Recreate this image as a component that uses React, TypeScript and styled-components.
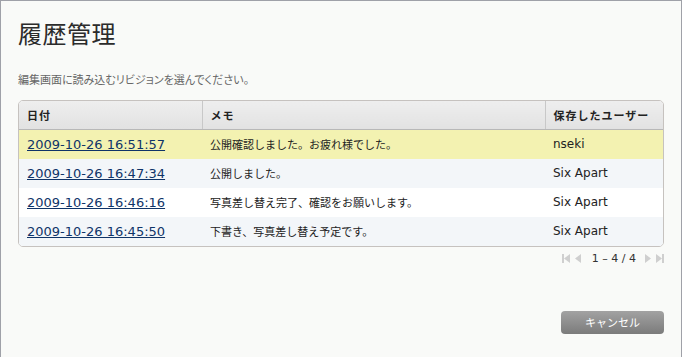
import styled, { createGlobalStyle } from "styled-components";

const GlobalStyle = createGlobalStyle`
  html, body {
    margin: 0;
    padding: 0;
  }
  body {
    font-family: "DejaVu Sans", "Noto Sans CJK JP", sans-serif;
    background: #f9faf8;
  }
`;

const Page = styled.div`
  box-sizing: border-box;
  width: 682px;
  height: 357px;
  border: 1px solid #9fa1a8;
  border-bottom: none;
  background: #f9faf8;
  padding: 18px 17px 0 17px;
  display: flex;
  flex-direction: column;
`;

const Title = styled.h1`
  margin: 0;
  font-family: "Noto Sans CJK JP", sans-serif;
  font-size: 24px;
  font-weight: 400;
  line-height: 28px;
  color: #2b2b2b;
  letter-spacing: 0.5px;
`;

const Lead = styled.p`
  margin: 24px 0 0 0;
  font-family: "Noto Sans CJK JP", sans-serif;
  font-size: 11px;
  line-height: 16px;
  color: #666;
  font-feature-settings: "palt";
`;

const TableBox = styled.div`
  margin-top: 13px;
  border: 1px solid #c6c2bf;
  border-radius: 5px;
  overflow: hidden;
  background: #fff;
`;

const Table = styled.table`
  width: 100%;
  border-collapse: collapse;
  table-layout: fixed;
`;

const Th = styled.th<{ $w?: number }>`
  box-sizing: border-box;
  width: ${(p) => (p.$w ? `${p.$w}px` : "auto")};
  height: 28px;
  padding: 0 8px;
  text-align: left;
  font-family: "Noto Sans CJK JP", sans-serif;
  font-size: 11px;
  font-weight: 700;
  color: #222;
  letter-spacing: 1px;
  background: linear-gradient(#eeeeee, #e2e2e2);
  border-bottom: 1px solid #b8b8b8;
  border-left: 1px solid #c8c8c8;
  &:first-child {
    border-left: none;
  }
`;

const Tr = styled.tr<{ $bg: string }>`
  background: ${(p) => p.$bg};
`;

const Td = styled.td`
  height: 29px;
  padding: 0 8px;
  font-family: "DejaVu Sans", "Noto Sans CJK JP", sans-serif;
  font-size: 12px;
  color: #222;
  white-space: nowrap;
`;

const Memo = styled.span`
  font-family: "Noto Sans CJK JP", sans-serif;
  font-size: 11px;
`;

const DateLink = styled.a`
  font-family: "DejaVu Sans", sans-serif;
  font-size: 13px;
  color: #0f3468;
  text-decoration: underline;
`;

const Pager = styled.div`
  display: flex;
  justify-content: flex-end;
  align-items: center;
  gap: 3px;
  margin-top: 5px;
  height: 14px;
`;

const PageText = styled.span`
  font-family: "DejaVu Sans", sans-serif;
  font-size: 11px;
  color: #333;
  margin: 0 6px 0 8px;
`;

const Footer = styled.div`
  display: flex;
  justify-content: flex-end;
  margin-top: 45px;
`;

const CancelButton = styled.button`
  width: 103px;
  height: 23px;
  border: none;
  border-radius: 4px;
  background: linear-gradient(#a2a2a2, #7b7b7b);
  color: #fff;
  font-family: "Noto Sans CJK JP", sans-serif;
  font-size: 11px;
  padding: 0;
  cursor: pointer;
`;

type Row = { date: string; memo: string; user: string };

const rows: Row[] = [
  { date: "2009-10-26 16:51:57", memo: "公開確認しました。お疲れ様でした。", user: "nseki" },
  { date: "2009-10-26 16:47:34", memo: "公開しました。", user: "Six Apart" },
  { date: "2009-10-26 16:46:16", memo: "写真差し替え完了、確認をお願いします。", user: "Six Apart" },
  { date: "2009-10-26 16:45:50", memo: "下書き、写真差し替え予定です。", user: "Six Apart" },
];

const rowBg = ["#f3f2b1", "#f3f6f9", "#ffffff", "#f3f6f9"];

function PagerIcon({ dir, edge }: { dir: "left" | "right"; edge?: boolean }) {
  const tri = dir === "left" ? "M8 1 L2 5.5 L8 10 Z" : "M0 1 L6 5.5 L0 10 Z";
  const bar = dir === "left" ? "M0 1 H2 V10 H0 Z" : "M6 1 H8 V10 H6 Z";
  return (
    <svg width="8" height="11" viewBox="0 0 8 11">
      <path d={tri} fill="#cfcfcf" />
      {edge && <path d={bar} fill="#cfcfcf" />}
    </svg>
  );
}

export default function App() {
  return (
    <>
      <GlobalStyle />
      <Page>
        <Title>履歴管理</Title>
        <Lead>編集画面に読み込むリビジョンを選んでください。</Lead>
        <TableBox>
          <Table>
            <thead>
              <tr>
                <Th $w={183}>日付</Th>
                <Th>メモ</Th>
                <Th $w={118}>保存したユーザー</Th>
              </tr>
            </thead>
            <tbody>
              {rows.map((r, i) => (
                <Tr key={r.date} $bg={rowBg[i]}>
                  <Td>
                    <DateLink href="#">{r.date}</DateLink>
                  </Td>
                  <Td>
                    <Memo>{r.memo}</Memo>
                  </Td>
                  <Td>{r.user}</Td>
                </Tr>
              ))}
            </tbody>
          </Table>
        </TableBox>
        <Pager>
          <PagerIcon dir="left" edge />
          <PagerIcon dir="left" />
          <PageText>1 – 4 / 4</PageText>
          <PagerIcon dir="right" />
          <PagerIcon dir="right" edge />
        </Pager>
        <Footer>
          <CancelButton>キャンセル</CancelButton>
        </Footer>
      </Page>
    </>
  );
}
